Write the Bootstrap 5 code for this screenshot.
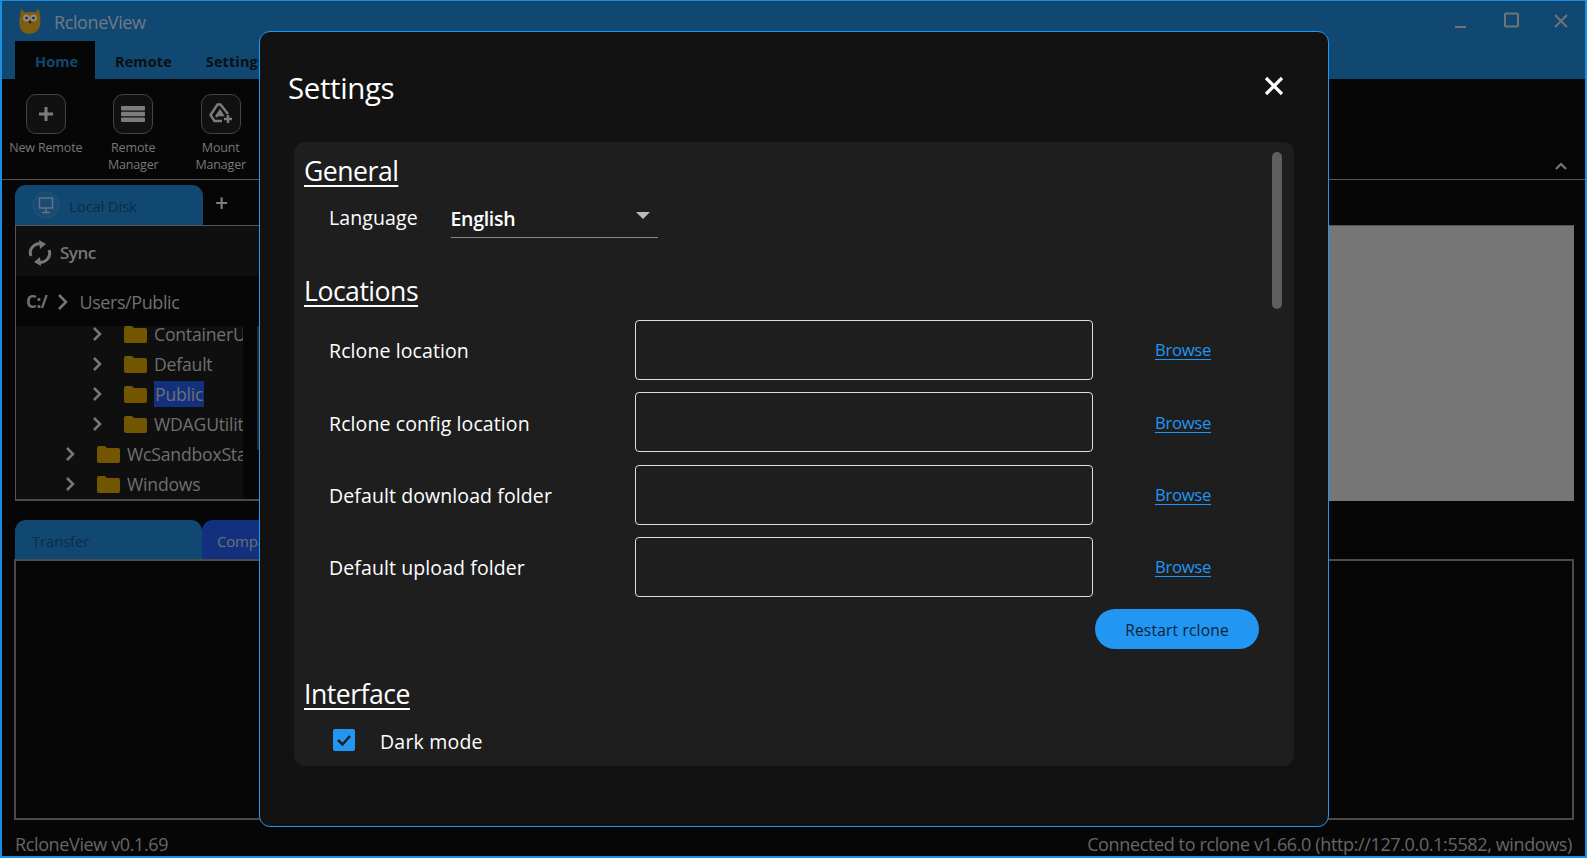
<!DOCTYPE html>
<html lang="en">
<head>
<meta charset="utf-8">
<title>RcloneView</title>
<link href="https://cdn.jsdelivr.net/npm/bootstrap@5.3.0/dist/css/bootstrap.min.css" rel="stylesheet">
<style>
html,body{height:100%;margin:0;overflow:hidden;background:#060606;}
body{font-family:"Open Sans","Noto Sans",sans-serif;color:#707070;}
.rv-win{position:relative;width:1587px;height:858px;background:#060606;border-style:solid;border-color:#1a8fdf;border-width:1px 2px 2px 2px;display:flex;flex-direction:column;}
.rv-head{background:#114872;height:78px;flex:none;}
.rv-titlebar{height:40px;padding-left:17px;}
.rv-title{font-size:18px;letter-spacing:-.4px;color:#707a84;margin:2px 0 0 13px;}
.rv-ctrls{margin-left:auto;padding-right:16px;gap:34px;}
.rv-ctrl{display:block;width:16px;height:16px;flex:none;}
.rv-ctrl-min{margin-top:1px;}
.rv-ctrl-max{margin-top:-2px;}
.rv-menu{height:38px;padding-left:13px;}
.rv-mtab{font-size:14.5px;font-weight:700;padding:0 20px;height:38px;line-height:41px;color:#0b0f13;letter-spacing:.1px;}
.rv-mtab-on{background:#060606;color:#114872;width:80px;}
.rv-mtab-last{padding-left:14px;}
.rv-ribbon{height:101px;flex:none;border-bottom:1px solid #555;position:relative;padding:15px 0 0 0;}
.rv-rbtn{width:87.500px;text-align:center;font-size:12.5px;line-height:17px;letter-spacing:-.15px;color:#787878;}
.rv-rico{width:40px;height:40px;margin:0 auto 5px;border:1px solid #444;border-radius:10px;background:#111;display:flex;align-items:center;justify-content:center;}
.rv-up{position:absolute;right:17px;top:83px;}
.rv-explorer{padding:5px 11px 0 13px;flex:none;}
.rv-tabs{height:40px;}
.rv-tab{width:188px;height:40px;background:#114872;border-radius:11px 11px 0 0;display:flex;align-items:center;font-size:15px;letter-spacing:-.2px;color:#0e2c44;flex:none;}
.rv-tab-txt{padding-top:3px;}
.rv-tab-low{height:39px;width:187px;}
.rv-tab-two{background:#12307e;color:#707070;padding-left:15px;}
.rv-tab-ico{margin:0 9px 0 17px;flex:none;}
.rv-plus{font-size:23px;line-height:1;margin:-4px 0 0 12px;color:#808080;font-weight:600;}
.rv-split{height:276px;display:flex;border-top:1px solid #555;}
.rv-left{width:1000px;flex:none;border-left:1px solid #555;border-bottom:2px solid #4a4a4a;}
.rv-sync{height:50px;background:#0f0f0f;padding:3px 0 0 12px;font-size:17px;font-weight:600;letter-spacing:-.5px;color:#777;}
.rv-syncico{margin-right:8px;flex:none;}
.rv-path{height:50px;padding:2px 0 0 10px;font-size:18px;letter-spacing:-.42px;color:#707070;}
.rv-drive{font-weight:700;font-size:17px;margin-right:10px;}
.rv-pchev{margin-right:10px;flex:none;}
.rv-tree{height:173px;display:flex;overflow:hidden;}
.rv-list{width:227px;background:#0f0f0f;overflow:hidden;flex:none;}
.rv-scroll{margin-left:14px;width:2px;background:#2a2a2a;height:124px;}
.rv-rows{margin-top:-7px;}
.rv-row{height:30px;font-size:17.6px;letter-spacing:-.2px;white-space:nowrap;color:#707070;}
.rv-lv2{padding-left:76px;}
.rv-lv1{padding-left:49px;}
.rv-chev{flex:none;}
.rv-folder{margin:0 7px 0 20px;flex:none;}
.rv-sel{background:#12307e;padding:0 1px;height:26px;line-height:26px;}
.rv-gray{flex:1;background:#767676;}
.rv-transfer{padding:19px 11px 0 12px;flex:none;}
.rv-tfer-tabs{padding-left:1px;}
.rv-tfer-first{padding-left:17px;}
.rv-tpanel{height:261px;border:2px solid #4a4a4a;background:#050505;}
.rv-status{height:36px;flex:none;padding:13px 13px 0 13px;font-size:18px;letter-spacing:-.37px;line-height:22px;color:#666;}

.rv-dialog{position:absolute;left:257px;top:30px;width:1070px;height:796px;background:#121212;border:1px solid #2196f3;border-radius:11px;color:#fff;padding:0 34px 0 34px;}
.rv-dhead{height:110px;}
.rv-dtitle{font-size:29.5px;letter-spacing:-.4px;margin:1px 0 0 -6px;font-weight:400;line-height:1.2;}
.rv-close{margin:-6px 10px 0 auto;background:none;border:0;padding:0;display:block;}
.rv-panel{position:relative;height:624px;background:#1e1e1e;border-radius:11px;padding:11px 0 0 10px;overflow:hidden;}
.rv-h{font-size:26.6px;line-height:36px;letter-spacing:-.5px;font-weight:400;margin:0;text-decoration:underline;text-decoration-thickness:2px;text-underline-offset:4px;}
.rv-h2{margin-top:35px;}
.rv-langrow{height:39px;margin:10px 0 0 25px;font-size:19.5px;}
.rv-langlbl{width:121.500px;letter-spacing:.1px;margin-top:-1px;}
.rv-select{width:207px;height:39px;position:relative;border-bottom:1px solid #888;font-weight:600;letter-spacing:-.3px;padding-top:5px;}
.rv-caret{position:absolute;right:8px;top:13px;width:0;height:0;border-left:7px solid transparent;border-right:7px solid transparent;border-top:7px solid #bbb;}
.rv-locs{margin:11px 0 0 25px;display:flex;flex-direction:column;gap:12.33px;}
.rv-locrow{height:60px;font-size:19.5px;letter-spacing:.1px;}
.rv-loclbl{width:306px;padding-top:2px;}
.rv-input{width:458px;height:60px;background:transparent;border:1px solid #ddd;border-radius:4px;flex:none;}
.rv-input:focus{background:transparent;box-shadow:none;border-color:#ddd;}
.rv-browse{margin-left:62px;font-size:16.7px;letter-spacing:-.3px;color:#2196f3;text-underline-offset:3px;}
.rv-btnrow{margin-top:12px;padding-left:791px;}
.rv-restart{width:164px;height:40px;background:#2196f3;border:0;color:#0f2233;font-size:15.5px;padding:3px 0 0;letter-spacing:.2px;}
.rv-h3{margin-top:27px;}
.rv-check{margin:15px 0 0 29px;height:30px;font-size:19.5px;letter-spacing:.2px;}
.rv-cbox{width:22px;height:22px;background:#2196f3;border-radius:2px;margin-right:25px;margin-top:-4px;flex:none;display:flex;align-items:center;justify-content:center;}
.rv-thumb{position:absolute;right:12px;top:10px;width:10px;height:157px;border-radius:5px;background:#5e5e5e;}
</style>
</head>
<body>
<div class="rv-win">
  <div class="rv-head">
    <div class="rv-titlebar d-flex align-items-center">
      <svg width="22" height="27" viewBox="0 0 22 27"><path d="M2 1l4 3.500c3-1 7-1 10 0l4-3.500 1 8c1 5 0 11-3 14-3 3-10 4-14 1-3-3-5-9-3-15z" fill="#7e5c10"/><circle cx="7.500" cy="10" r="3.500" fill="#8a8a80"/><circle cx="14.500" cy="10" r="3.500" fill="#8a8a80"/><circle cx="7.500" cy="10" r="1.300" fill="#222"/><circle cx="14.500" cy="10" r="1.300" fill="#222"/><path d="M11 12l-1.500 2 1.500 2 1.500-2z" fill="#222"/></svg>
      <span class="rv-title">RcloneView</span>
      <div class="rv-ctrls d-flex align-items-center">
        <svg class="rv-ctrl rv-ctrl-min" viewBox="0 0 16 16"><rect x="2" y="12" width="11" height="2" fill="#6e7478"/></svg>
        <svg class="rv-ctrl rv-ctrl-max" viewBox="0 0 16 16"><rect x="2" y="1.500" width="13" height="13" rx="1" fill="none" stroke="#6e7478" stroke-width="2"/></svg>
        <svg class="rv-ctrl" viewBox="0 0 16 16"><path d="M2 2l12 12M14 2L2 14" stroke="#6e7478" stroke-width="2"/></svg>
      </div>
    </div>
    <div class="rv-menu d-flex">
      <div class="rv-mtab rv-mtab-on">Home</div>
      <div class="rv-mtab">Remote</div>
      <div class="rv-mtab rv-mtab-last">Settings</div>
    </div>
  </div>
  <div class="rv-ribbon d-flex align-items-start">
    <div class="rv-rbtn">
      <div class="rv-rico"><svg width="20" height="20" viewBox="0 0 20 20"><path d="M10 3v14M3 10h14" stroke="#7c7c7c" stroke-width="3"/></svg></div>
      New Remote
    </div>
    <div class="rv-rbtn">
      <div class="rv-rico"><svg width="24" height="20" viewBox="0 0 24 20"><g fill="#7c7c7c"><rect y="2" width="24" height="4.500" rx="1"/><rect y="7.800" width="24" height="4.500" rx="1"/><rect y="13.600" width="24" height="4.500" rx="1"/></g></svg></div>
      Remote<br>Manager
    </div>
    <div class="rv-rbtn">
      <div class="rv-rico"><svg width="26" height="24" viewBox="0 0 26 24"><g fill="none" stroke="#7c7c7c" stroke-width="2.400"><path d="M14 19H6.500L2.500 13l7-10.500h3L20 12"/><path d="M8 15l4-6 2.500 4H10"/><path d="M20 13v8M16 17h8"/></g></svg></div>
      Mount<br>Manager
    </div>
    <svg class="rv-up" width="14" height="9" viewBox="0 0 14 9"><path d="M2 7l5-5 5 5" fill="none" stroke="#777" stroke-width="2.200"/></svg>
  </div>
  <div class="rv-explorer">
    <div class="rv-tabs d-flex align-items-center">
      <div class="rv-tab">
        <svg class="rv-tab-ico" width="28" height="28" viewBox="0 0 28 28"><circle cx="14" cy="14" r="13" fill="#1b4b72" stroke="#37607f" stroke-dasharray="1 1"/><g fill="none" stroke="#5e7488" stroke-width="1.500"><rect x="7.500" y="7" width="13" height="10"/><path d="M14 17v4M10 21.500h8"/></g></svg>
        <span class="rv-tab-txt">Local Disk</span>
      </div>
      <span class="rv-plus">+</span>
    </div>
    <div class="rv-split">
      <div class="rv-left">
        <div class="rv-sync d-flex align-items-center">
          <svg class="rv-syncico" width="24" height="28" viewBox="0 0 24 28"><g fill="none" stroke="#777" stroke-width="3"><path d="M3 17A9 9 0 0 1 15 5.500"/><path d="M21 11A9 9 0 0 1 9 22.500"/></g><path d="M11 1l7 4-6 5zM13 27l-7-4 6-5z" fill="#777"/></svg>
          Sync
        </div>
        <div class="rv-path d-flex align-items-center">
          <b class="rv-drive">C:/</b>
          <svg class="rv-pchev" width="12" height="18" viewBox="0 0 12 18"><path d="M2 2l7 7-7 7" fill="none" stroke="#777" stroke-width="2.500"/></svg>
          Users/Public
        </div>
        <div class="rv-tree">
          <div class="rv-list">
            <div class="rv-rows">
              <div class="rv-row rv-lv2 d-flex align-items-center"><svg class="rv-chev" width="12" height="16" viewBox="0 0 12 16"><path d="M2 2l6 6-6 6" fill="none" stroke="#777" stroke-width="2.500"/></svg><svg class="rv-folder" width="23" height="17" viewBox="0 0 23 17"><path d="M0 2a2 2 0 0 1 2-2h6l2 2h11a2 2 0 0 1 2 2v11a2 2 0 0 1-2 2H2a2 2 0 0 1-2-2z" fill="#725700"/></svg>ContainerU</div>
              <div class="rv-row rv-lv2 d-flex align-items-center"><svg class="rv-chev" width="12" height="16" viewBox="0 0 12 16"><path d="M2 2l6 6-6 6" fill="none" stroke="#777" stroke-width="2.500"/></svg><svg class="rv-folder" width="23" height="17" viewBox="0 0 23 17"><path d="M0 2a2 2 0 0 1 2-2h6l2 2h11a2 2 0 0 1 2 2v11a2 2 0 0 1-2 2H2a2 2 0 0 1-2-2z" fill="#725700"/></svg>Default</div>
              <div class="rv-row rv-lv2 d-flex align-items-center"><svg class="rv-chev" width="12" height="16" viewBox="0 0 12 16"><path d="M2 2l6 6-6 6" fill="none" stroke="#777" stroke-width="2.500"/></svg><svg class="rv-folder" width="23" height="17" viewBox="0 0 23 17"><path d="M0 2a2 2 0 0 1 2-2h6l2 2h11a2 2 0 0 1 2 2v11a2 2 0 0 1-2 2H2a2 2 0 0 1-2-2z" fill="#725700"/></svg><span class="rv-sel">Public</span></div>
              <div class="rv-row rv-lv2 d-flex align-items-center"><svg class="rv-chev" width="12" height="16" viewBox="0 0 12 16"><path d="M2 2l6 6-6 6" fill="none" stroke="#777" stroke-width="2.500"/></svg><svg class="rv-folder" width="23" height="17" viewBox="0 0 23 17"><path d="M0 2a2 2 0 0 1 2-2h6l2 2h11a2 2 0 0 1 2 2v11a2 2 0 0 1-2 2H2a2 2 0 0 1-2-2z" fill="#725700"/></svg>WDAGUtilit</div>
              <div class="rv-row rv-lv1 d-flex align-items-center"><svg class="rv-chev" width="12" height="16" viewBox="0 0 12 16"><path d="M2 2l6 6-6 6" fill="none" stroke="#777" stroke-width="2.500"/></svg><svg class="rv-folder" width="23" height="17" viewBox="0 0 23 17"><path d="M0 2a2 2 0 0 1 2-2h6l2 2h11a2 2 0 0 1 2 2v11a2 2 0 0 1-2 2H2a2 2 0 0 1-2-2z" fill="#725700"/></svg>WcSandboxSta</div>
              <div class="rv-row rv-lv1 d-flex align-items-center"><svg class="rv-chev" width="12" height="16" viewBox="0 0 12 16"><path d="M2 2l6 6-6 6" fill="none" stroke="#777" stroke-width="2.500"/></svg><svg class="rv-folder" width="23" height="17" viewBox="0 0 23 17"><path d="M0 2a2 2 0 0 1 2-2h6l2 2h11a2 2 0 0 1 2 2v11a2 2 0 0 1-2 2H2a2 2 0 0 1-2-2z" fill="#725700"/></svg>Windows</div>
            </div>
          </div>
          <div class="rv-scroll"></div>
        </div>
      </div>
      <div class="rv-gray"></div>
    </div>
  </div>
  <div class="rv-transfer">
    <div class="d-flex rv-tfer-tabs">
      <div class="rv-tab rv-tab-low rv-tfer-first"><span class="rv-tab-txt">Transfer</span></div>
      <div class="rv-tab rv-tab-low rv-tab-two"><span class="rv-tab-txt">Compare</span></div>
    </div>
    <div class="rv-tpanel"></div>
  </div>
  <div class="rv-status d-flex justify-content-between">
    <span>RcloneView v0.1.69</span>
    <span>Connected to rclone v1.66.0 (http://127.0.0.1:5582, windows)</span>
  </div>

  <div class="rv-dialog" role="dialog">
    <div class="rv-dhead d-flex align-items-center">
      <h5 class="rv-dtitle">Settings</h5>
      <button class="rv-close" type="button" aria-label="Close"><svg width="20" height="20" viewBox="0 0 20 20"><path d="M2 2l16 16M18 2L2 18" stroke="#fff" stroke-width="3.200"/></svg></button>
    </div>
    <div class="rv-panel">
      <h4 class="rv-h">General</h4>
      <div class="rv-langrow d-flex align-items-center">
        <span class="rv-langlbl">Language</span>
        <div class="rv-select">English<span class="rv-caret"></span></div>
      </div>
      <h4 class="rv-h rv-h2">Locations</h4>
      <div class="rv-locs">
        <div class="rv-locrow d-flex align-items-center"><span class="rv-loclbl">Rclone location</span><input class="form-control rv-input" type="text" aria-label="Rclone location"><a class="rv-browse" href="#">Browse</a></div>
        <div class="rv-locrow d-flex align-items-center"><span class="rv-loclbl">Rclone config location</span><input class="form-control rv-input" type="text" aria-label="Rclone config location"><a class="rv-browse" href="#">Browse</a></div>
        <div class="rv-locrow d-flex align-items-center"><span class="rv-loclbl">Default download folder</span><input class="form-control rv-input" type="text" aria-label="Default download folder"><a class="rv-browse" href="#">Browse</a></div>
        <div class="rv-locrow d-flex align-items-center"><span class="rv-loclbl">Default upload folder</span><input class="form-control rv-input" type="text" aria-label="Default upload folder"><a class="rv-browse" href="#">Browse</a></div>
      </div>
      <div class="rv-btnrow"><button class="btn rounded-pill rv-restart" type="button">Restart rclone</button></div>
      <h4 class="rv-h rv-h3">Interface</h4>
      <div class="rv-check d-flex align-items-center">
        <span class="rv-cbox"><svg width="16" height="14" viewBox="0 0 16 14"><path d="M2 7l4.500 4.500L14 3" fill="none" stroke="#1e1e1e" stroke-width="2.500"/></svg></span>
        Dark mode
      </div>
      <div class="rv-thumb"></div>
    </div>
  </div>
</div>
<script src="https://cdn.jsdelivr.net/npm/bootstrap@5.3.0/dist/js/bootstrap.bundle.min.js"></script>
</body>
</html>
